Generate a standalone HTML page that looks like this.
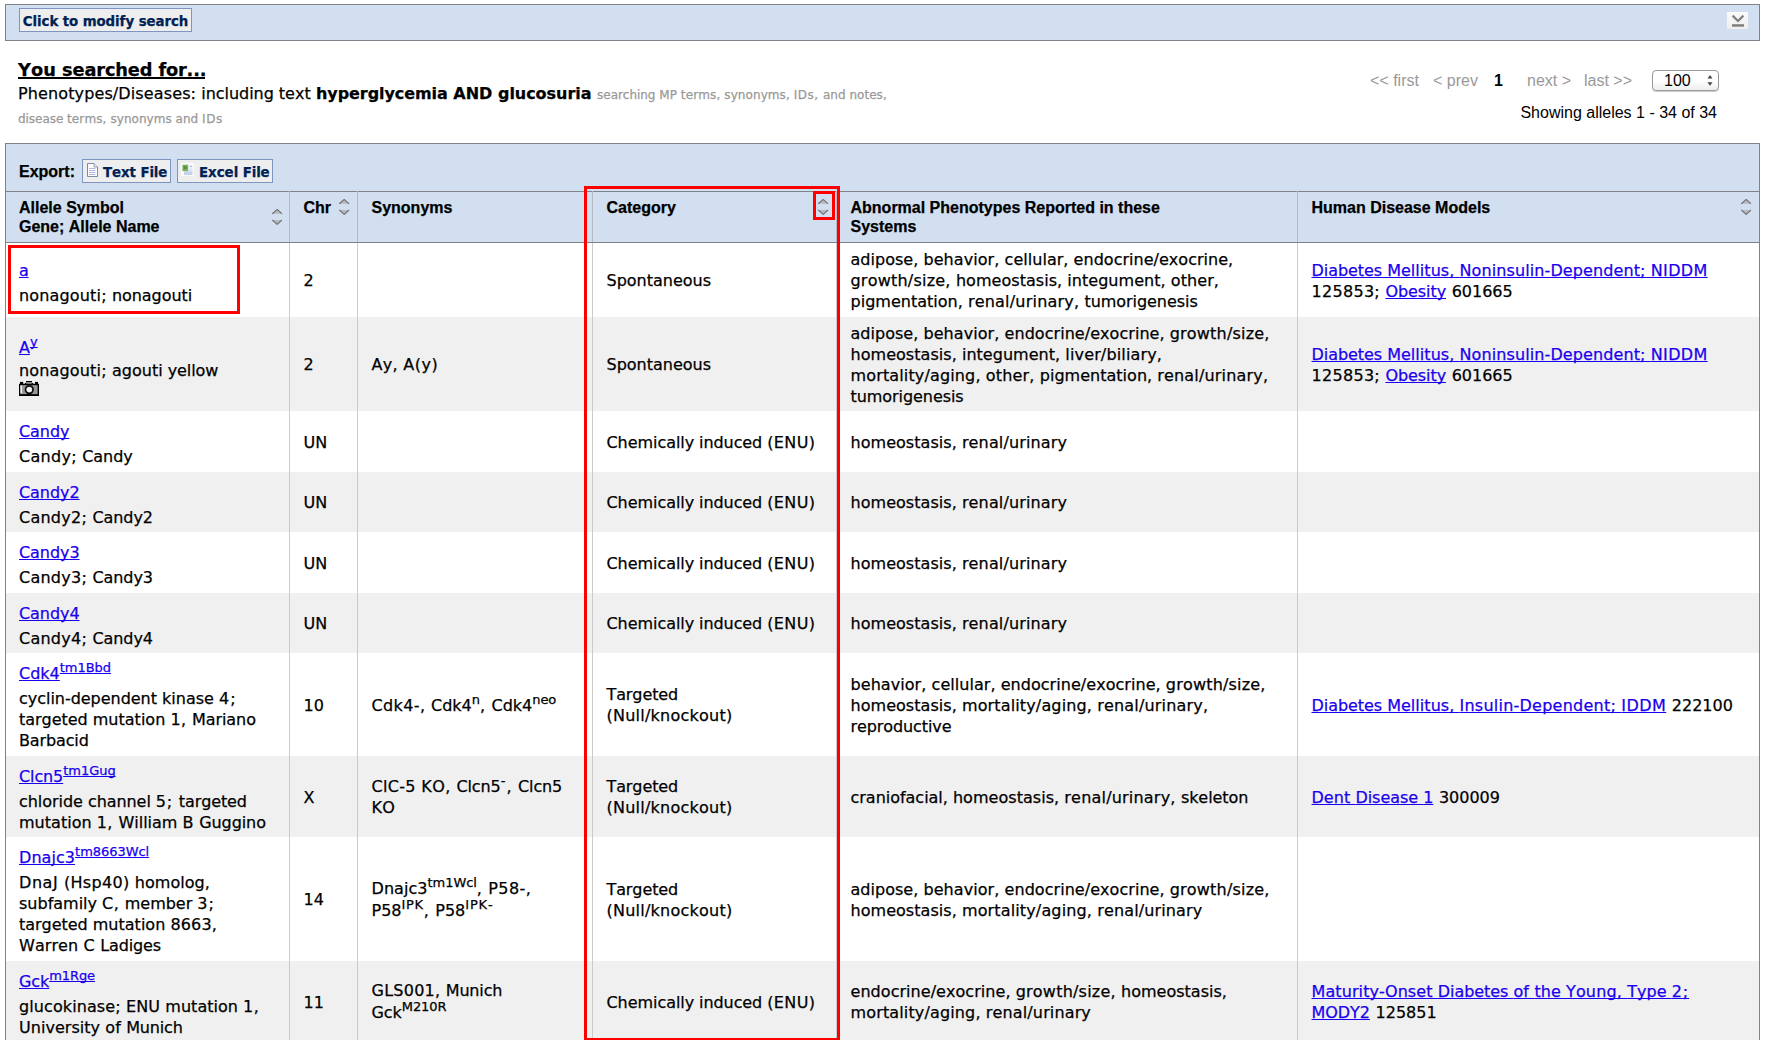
<!DOCTYPE html>
<html lang="en">
<head>
<meta charset="utf-8">
<title>Phenotypes, Alleles &amp; Disease Models Search</title>
<style>
html,body{margin:0;padding:0;background:#fff;}
body{width:1767px;height:1040px;overflow:hidden;position:relative;
  font-family:"DejaVu Sans","Liberation Sans",sans-serif;font-size:16px;color:#000;font-kerning:none;font-variant-ligatures:none;-webkit-text-stroke:0.25px;}
a{color:#1a00ee;text-decoration:underline;text-decoration-skip-ink:none;}
.abs{position:absolute;}
#topbar{left:5px;top:4px;width:1753px;height:35px;background:#d2dff0;border:1px solid #7f8389;}
#modbtn{left:19px;top:8px;height:22px;width:171px;border:1px solid #7d95c0;background:#eeeeee;
  font-weight:bold;font-size:13.33px;color:#002255;line-height:25px;text-align:center;white-space:nowrap;}
#collapse{left:1727px;top:12px;width:21px;height:17px;}
#ysf{text-decoration-skip-ink:none;left:18px;top:58px;font-weight:bold;font-size:17.77px;line-height:24px;white-space:nowrap;}
#ysf i{position:absolute;left:0;right:1px;top:19px;height:2px;background:#000;}
#q1{left:18px;top:83px;line-height:22px;white-space:nowrap;}
.small{font-size:12px;color:#999;}
#q2{left:18px;top:109px;line-height:20px;white-space:nowrap;}
#pag{top:70px;left:1360px;width:360px;height:22px;font-family:"Liberation Sans",sans-serif;font-size:16px;color:#999;white-space:nowrap;}
#pag span{position:absolute;top:0;line-height:22px;}
#sel{left:1652px;top:70px;width:65px;height:19px;border:1px solid #9a9a9a;border-radius:4px;background:linear-gradient(#fff,#fff 50%,#eee);box-shadow:0 1px 1px rgba(0,0,0,.2);
  font-family:"Liberation Sans",sans-serif;font-size:16px;line-height:19px;}
#showing{top:102px;right:50px;font-family:"Liberation Sans",sans-serif;font-size:16px;line-height:22px;white-space:nowrap;}
#wrap{left:5px;top:143px;width:1753px;height:900px;border:1px solid #7f8389;background:#d2dff0;}
#export{left:19px;top:162px;font-family:"Liberation Sans",sans-serif;font-weight:bold;font-size:16px;line-height:20px;}
.xbtn{top:159px;height:22px;border:1px solid #7d95c0;background:#eeeeee;font-weight:bold;font-size:13.33px;color:#002255;line-height:25px;white-space:nowrap;}
.xbtn span.t{position:absolute;top:0;}
table{position:absolute;left:6px;top:191px;border-collapse:collapse;table-layout:fixed;width:1753px;}
th{background:#d2dff0;font-family:"Liberation Sans",sans-serif;font-weight:bold;font-size:16px;line-height:19px;text-align:left;
  vertical-align:top;padding:6px 0 0 14px;border-top:1px solid #7f8389;border-bottom:1px solid #7f8389;border-right:1px solid #b4bac4;height:43px;position:relative;white-space:nowrap;}
td{padding:2px 0 0 14px;vertical-align:middle;border-right:1px solid #cbcbcb;line-height:21px;white-space:nowrap;}
td.c1{padding-top:6px;padding-left:13px;} th:first-child{padding-left:13px;} td.c1 .n{margin-top:4px;}
tr.o td{background:#fff;} tr.e td{background:#f0f0f0;}
th:last-child,td:last-child{border-right:none;}
sup{font-size:13px;line-height:0;vertical-align:baseline;position:relative;top:-7px;}
a sup{display:inline-block;text-decoration:underline;text-decoration-skip-ink:none;}
.sort{position:absolute;}
#pag,#sel,#showing{-webkit-text-stroke:0;}
.u1{position:relative;top:-1px;}
.red{border:3px solid #f00;box-sizing:border-box;}
</style>
</head>
<body>
<div id="topbar" class="abs"></div>
<div id="modbtn" class="abs"><span style="letter-spacing:-0.038px">Click </span><span style="letter-spacing:-0.130px">to </span><span style="letter-spacing:-0.043px">modify </span><span style="letter-spacing:-0.051px">search</span></div>
<svg id="collapse" class="abs" width="21" height="17" viewBox="0 0 21 17"><defs><linearGradient id="cg" x1="0" y1="0" x2="0" y2="1"><stop offset="0" stop-color="#fbfbfb"/><stop offset="1" stop-color="#eeeeee"/></linearGradient></defs><rect width="21" height="17" fill="url(#cg)"/><path d="M5.6 3.6 L11 9 L16.4 3.6" fill="none" stroke="#7f7f7f" stroke-width="2.2"/><rect x="5" y="12.2" width="12" height="2.5" fill="#7f7f7f"/></svg>

<div id="ysf" class="abs"><span style="letter-spacing:0.028px">You </span><span style="letter-spacing:-0.119px">searched </span><span style="letter-spacing:-0.192px">for...</span><i></i></div>
<div id="q1" class="abs"><span style="letter-spacing:0.121px">Phenotypes/Diseases: </span><span style="letter-spacing:-0.051px">including </span><span style="letter-spacing:0.058px">text </span><b><span style="letter-spacing:-0.073px">hyperglycemia </span><span style="letter-spacing:0.023px">AND </span><span style="letter-spacing:-0.044px">glucosuria</span></b><span style="letter-spacing:0.539px"> </span><span class="small"><span style="letter-spacing:-0.034px">searching </span><span style="letter-spacing:0.055px">MP </span><span style="letter-spacing:0.131px">terms, </span><span style="letter-spacing:0.086px">synonyms, </span><span style="letter-spacing:0.495px">IDs, </span><span style="letter-spacing:0.026px">and </span><span style="letter-spacing:0.045px">notes,</span></span></div>
<div id="q2" class="abs small"><span style="letter-spacing:-0.049px">disease </span><span style="letter-spacing:0.131px">terms, </span><span style="letter-spacing:0.034px">synonyms </span><span style="letter-spacing:0.026px">and </span><span style="letter-spacing:0.506px">IDs</span></div>

<div id="pag" class="abs"><span style="left:10px">&lt;&lt; first</span><span style="left:73px">&lt; prev</span><span style="left:134px;color:#000;font-weight:bold">1</span><span style="left:167px">next &gt;</span><span style="left:224px">last &gt;&gt;</span></div>
<div id="sel" class="abs"><span style="position:absolute;left:11px">100</span><svg style="position:absolute;left:52.6px;top:4px" width="8" height="12" viewBox="0 0 8 12"><path d="M1.5 3.5 L4 0 L6.5 3.5 Z M1.5 7.2 L4 10.7 L6.5 7.2 Z" fill="#444"/></svg></div>
<div id="showing" class="abs">Showing alleles 1 - 34 of 34</div>

<div id="wrap" class="abs"></div>
<div id="export" class="abs">Export:</div>
<div class="abs xbtn" style="left:82px;width:87px;"><svg style="position:absolute;left:4px;top:3px" width="11" height="14" viewBox="0 0 11 14"><path d="M0.5 0.5 H7 L10.5 4 V13.5 H0.5 Z" fill="#fdfdff" stroke="#7d8aa0" stroke-width="1"/><path d="M7 0.5 V4 H10.5" fill="#e8ecf4" stroke="#7d8aa0" stroke-width="0.8"/><path d="M2 5.5 H8.5 M2 7.5 H8.5 M2 9.5 H8.5 M2 11.5 H8.5" stroke="#a9b2dc" stroke-width="0.9"/></svg><span class="t" style="left:20px"><span style="letter-spacing:-0.052px">Text </span><span style="letter-spacing:-0.163px">File</span></span></div>
<div class="abs xbtn" style="left:177px;width:94px;"><svg style="position:absolute;left:3px;top:3px" width="13" height="13" viewBox="0 0 13 13"><defs><linearGradient id="xg" x1="0" y1="0" x2="0" y2="1"><stop offset="0" stop-color="#f3f6fb"/><stop offset="0.55" stop-color="#dde6f4"/><stop offset="1" stop-color="#b3c6e4"/></linearGradient></defs><rect width="13" height="13" fill="#fafafa"/><path d="M3 1.8 H9.4 L11.5 4 V11.7 H3 Z" fill="url(#xg)"/><path d="M9.4 1.8 L11.5 4 H9.4 Z" fill="#a9b7cf"/><rect x="1.4" y="1.7" width="5.7" height="6.4" fill="#7fb061"/><rect x="2.6" y="3.3" width="3" height="2.8" fill="#4c9436"/></svg><span class="t" style="left:21px"><span style="letter-spacing:-0.004px">Excel </span><span style="letter-spacing:-0.163px">File</span></span></div>

<table>
<colgroup><col style="width:283px"><col style="width:68px"><col style="width:235px"><col style="width:244px"><col style="width:461px"><col style="width:462px"></colgroup>
<tr style="height:51px"><th>Allele Symbol<br>Gene; Allele Name<svg class="sort" style="right:6.5px;top:17.2px" width="10.4" height="15.8" viewBox="0 0 10.4 15.8"><path d="M0.4 4.8 L5.2 0.4 L10 4.8 Z" fill="#b7b9bb"/><path d="M0.3 4.8 L5.2 0.4 L10.1 4.8" fill="none" stroke="#686d74" stroke-width="1.05"/><path d="M0.4 11 L5.2 15.4 L10 11 Z" fill="#b7b9bb"/><path d="M0.3 11 L5.2 15.4 L10.1 11" fill="none" stroke="#686d74" stroke-width="1.05"/></svg></th><th>Chr<svg class="sort" style="right:6.9px;top:7.1px" width="10.4" height="15.8" viewBox="0 0 10.4 15.8"><path d="M0.4 4.8 L5.2 0.4 L10 4.8 Z" fill="#b7b9bb"/><path d="M0.3 4.8 L5.2 0.4 L10.1 4.8" fill="none" stroke="#686d74" stroke-width="1.05"/><path d="M0.4 11 L5.2 15.4 L10 11 Z" fill="#b7b9bb"/><path d="M0.3 11 L5.2 15.4 L10.1 11" fill="none" stroke="#686d74" stroke-width="1.05"/></svg></th><th>Synonyms</th><th>Category<svg class="sort" style="right:6.8px;top:7.1px" width="10.4" height="15.8" viewBox="0 0 10.4 15.8"><path d="M0.4 4.8 L5.2 0.4 L10 4.8 Z" fill="#b7b9bb"/><path d="M0.3 4.8 L5.2 0.4 L10.1 4.8" fill="none" stroke="#686d74" stroke-width="1.05"/><path d="M0.4 11 L5.2 15.4 L10 11 Z" fill="#b7b9bb"/><path d="M0.3 11 L5.2 15.4 L10.1 11" fill="none" stroke="#686d74" stroke-width="1.05"/></svg></th><th>Abnormal Phenotypes Reported in these<br>Systems</th><th>Human Disease Models<svg class="sort" style="right:7.9px;top:6.9px" width="10.4" height="15.8" viewBox="0 0 10.4 15.8"><path d="M0.4 4.8 L5.2 0.4 L10 4.8 Z" fill="#b7b9bb"/><path d="M0.3 4.8 L5.2 0.4 L10.1 4.8" fill="none" stroke="#686d74" stroke-width="1.05"/><path d="M0.4 11 L5.2 15.4 L10 11 Z" fill="#b7b9bb"/><path d="M0.3 11 L5.2 15.4 L10.1 11" fill="none" stroke="#686d74" stroke-width="1.05"/></svg></th></tr>
<tr class="o" style="height:74px"><td class="c1"><div class="l"><a><span style="letter-spacing:-0.195px">a</span></a></div><div class="n"><span style="letter-spacing:0.164px">nonagouti; </span><span style="letter-spacing:-0.068px">nonagouti</span></div></td><td><span style="letter-spacing:-0.008px">2</span></td><td></td><td><span style="letter-spacing:-0.008px">Spontaneous</span></td><td><span style="letter-spacing:0.029px">adipose, </span><span style="letter-spacing:0.068px">behavior, </span><span style="letter-spacing:0.037px">cellular, </span><span style="letter-spacing:0.023px">endocrine/exocrine,</span><br><span style="letter-spacing:0.215px">growth/size, </span><span style="letter-spacing:0.042px">homeostasis, </span><span style="letter-spacing:0.033px">integument, </span><span style="letter-spacing:0.102px">other,</span><br><span style="letter-spacing:0.015px">pigmentation, </span><span style="letter-spacing:0.203px">renal/urinary, </span><span style="letter-spacing:-0.059px">tumorigenesis</span></td><td><a><span style="letter-spacing:-0.054px">Diabetes </span><span style="letter-spacing:0.049px">Mellitus, </span><span style="letter-spacing:0.104px">Noninsulin-Dependent; </span><span style="letter-spacing:0.342px">NIDDM</span></a><br><span style="letter-spacing:0.296px">125853; </span><a><span style="letter-spacing:-0.075px">Obesity</span></a><span style="letter-spacing:0.539px"> </span><span style="letter-spacing:-0.008px">601665</span></td></tr>
<tr class="e" style="height:94px"><td class="c1"><div class="l"><a><span style="letter-spacing:-0.008px">A</span><sup><span style="letter-spacing:0.000px">y</span></sup></a></div><div class="n" style="margin-top:2px"><span style="letter-spacing:0.164px">nonagouti; </span><span style="letter-spacing:0.006px">agouti </span><span style="letter-spacing:-0.082px">yellow</span></div><div style="height:16px"><svg style="display:block" width="20" height="15" viewBox="0 0 20 15"><rect x="1" y="0.9" width="3.2" height="3" fill="#000"/><rect x="16" y="0.9" width="3" height="3" fill="#000"/><rect x="7" y="0" width="6" height="4" fill="#999"/><rect x="7" y="0" width="6" height="1.1" fill="#000"/><rect x="0.7" y="3.5" width="18.6" height="10.6" fill="#999" stroke="#000" stroke-width="1.4"/><rect x="0" y="13.4" width="20" height="1.6" fill="#000"/><rect x="1.4" y="4.3" width="1.6" height="8" fill="#f2f2f2"/><path d="M6 3.6 L7 2 M14 3.6 L13 2" stroke="#000" stroke-width="1.4"/><circle cx="10.3" cy="8.6" r="3.75" fill="#999" stroke="#111" stroke-width="1.8"/><circle cx="10.3" cy="8.6" r="2.7" fill="#f4f4f4"/><rect x="8.3" y="12.4" width="3.6" height="1.2" fill="#000"/></svg></div></td><td><span style="letter-spacing:-0.008px">2</span></td><td><span style="letter-spacing:0.316px">Ay, </span><span style="letter-spacing:0.510px">A(y)</span></td><td><span style="letter-spacing:-0.008px">Spontaneous</span></td><td><span style="letter-spacing:0.029px">adipose, </span><span style="letter-spacing:0.068px">behavior, </span><span style="letter-spacing:0.049px">endocrine/exocrine, </span><span style="letter-spacing:0.188px">growth/size,</span><br><span style="letter-spacing:0.042px">homeostasis, </span><span style="letter-spacing:0.033px">integument, </span><span style="letter-spacing:0.153px">liver/biliary,</span><br><span style="letter-spacing:0.142px">mortality/aging, </span><span style="letter-spacing:0.164px">other, </span><span style="letter-spacing:0.015px">pigmentation, </span><span style="letter-spacing:0.179px">renal/urinary,</span><br><span style="letter-spacing:-0.059px">tumorigenesis</span></td><td><a><span style="letter-spacing:-0.054px">Diabetes </span><span style="letter-spacing:0.049px">Mellitus, </span><span style="letter-spacing:0.104px">Noninsulin-Dependent; </span><span style="letter-spacing:0.342px">NIDDM</span></a><br><span style="letter-spacing:0.296px">125853; </span><a><span style="letter-spacing:-0.075px">Obesity</span></a><span style="letter-spacing:0.539px"> </span><span style="letter-spacing:-0.008px">601665</span></td></tr>
<tr class="o" style="height:61px"><td class="c1"><div class="l"><a><span style="letter-spacing:-0.080px">Candy</span></a></div><div class="n"><span style="letter-spacing:0.288px">Candy; </span><span style="letter-spacing:-0.080px">Candy</span></div></td><td><span style="letter-spacing:0.000px">UN</span></td><td></td><td><span style="letter-spacing:-0.058px">Chemically </span><span style="letter-spacing:-0.087px">induced </span><span style="letter-spacing:0.411px">(ENU)</span></td><td><span style="letter-spacing:0.042px">homeostasis, </span><span style="letter-spacing:0.136px">renal/urinary</span></td><td></td></tr>
<tr class="e" style="height:60px"><td class="c1"><div class="l"><a><span style="letter-spacing:-0.068px">Candy2</span></a></div><div class="n"><span style="letter-spacing:0.251px">Candy2; </span><span style="letter-spacing:-0.068px">Candy2</span></div></td><td><span style="letter-spacing:0.000px">UN</span></td><td></td><td><span style="letter-spacing:-0.058px">Chemically </span><span style="letter-spacing:-0.087px">induced </span><span style="letter-spacing:0.411px">(ENU)</span></td><td><span style="letter-spacing:0.042px">homeostasis, </span><span style="letter-spacing:0.136px">renal/urinary</span></td><td></td></tr>
<tr class="o" style="height:61px"><td class="c1"><div class="l"><a><span style="letter-spacing:-0.068px">Candy3</span></a></div><div class="n"><span style="letter-spacing:0.251px">Candy3; </span><span style="letter-spacing:-0.068px">Candy3</span></div></td><td><span style="letter-spacing:0.000px">UN</span></td><td></td><td><span style="letter-spacing:-0.058px">Chemically </span><span style="letter-spacing:-0.087px">induced </span><span style="letter-spacing:0.411px">(ENU)</span></td><td><span style="letter-spacing:0.042px">homeostasis, </span><span style="letter-spacing:0.136px">renal/urinary</span></td><td></td></tr>
<tr class="e" style="height:60px"><td class="c1"><div class="l"><a><span style="letter-spacing:-0.068px">Candy4</span></a></div><div class="n"><span style="letter-spacing:0.251px">Candy4; </span><span style="letter-spacing:-0.068px">Candy4</span></div></td><td><span style="letter-spacing:0.000px">UN</span></td><td></td><td><span style="letter-spacing:-0.058px">Chemically </span><span style="letter-spacing:-0.087px">induced </span><span style="letter-spacing:0.411px">(ENU)</span></td><td><span style="letter-spacing:0.042px">homeostasis, </span><span style="letter-spacing:0.136px">renal/urinary</span></td><td></td></tr>
<tr class="o" style="height:103px"><td class="c1"><div class="l"><a><span style="letter-spacing:0.002px">Cdk4</span><sup><span style="letter-spacing:-0.052px">tm1Bbd</span></sup></a></div><div class="n"><span style="letter-spacing:-0.030px">cyclin-dependent </span><span style="letter-spacing:0.023px">kinase </span><span style="letter-spacing:0.934px">4;</span><br><span style="letter-spacing:-0.038px">targeted </span><span style="letter-spacing:0.024px">mutation </span><span style="letter-spacing:0.422px">1, </span><span style="letter-spacing:-0.087px">Mariano</span><br><span style="letter-spacing:-0.130px">Barbacid</span></div></td><td><span style="letter-spacing:-0.008px">10</span></td><td><span style="letter-spacing:0.396px">Cdk4-, </span><span style="letter-spacing:0.002px">Cdk4</span><sup><span style="letter-spacing:-0.013px">n</span></sup><span style="letter-spacing:0.637px">, </span><span style="letter-spacing:0.002px">Cdk4</span><sup><span style="letter-spacing:-0.110px">neo</span></sup></td><td><span style="letter-spacing:-0.104px">Targeted</span><br><span style="letter-spacing:0.239px">(Null/knockout)</span></td><td><span style="letter-spacing:0.068px">behavior, </span><span style="letter-spacing:0.037px">cellular, </span><span style="letter-spacing:0.049px">endocrine/exocrine, </span><span style="letter-spacing:0.188px">growth/size,</span><br><span style="letter-spacing:0.042px">homeostasis, </span><span style="letter-spacing:0.142px">mortality/aging, </span><span style="letter-spacing:0.179px">renal/urinary,</span><br><span style="letter-spacing:-0.090px">reproductive</span></td><td><a><span style="letter-spacing:-0.054px">Diabetes </span><span style="letter-spacing:0.049px">Mellitus, </span><span style="letter-spacing:0.235px">Insulin-Dependent; </span><span style="letter-spacing:0.428px">IDDM</span></a><span style="letter-spacing:0.539px"> </span><span style="letter-spacing:-0.008px">222100</span></td></tr>
<tr class="e" style="height:81px"><td class="c1"><div class="l"><a><span style="letter-spacing:-0.108px">Clcn5</span><sup><span style="letter-spacing:-0.026px">tm1Gug</span></sup></a></div><div class="n"><span style="letter-spacing:-0.042px">chloride </span><span style="letter-spacing:-0.066px">channel </span><span style="letter-spacing:0.802px">5; </span><span style="letter-spacing:-0.110px">targeted</span><br><span style="letter-spacing:0.024px">mutation </span><span style="letter-spacing:0.422px">1, </span><span style="letter-spacing:0.013px">William </span><span style="letter-spacing:0.266px">B </span><span style="letter-spacing:-0.076px">Guggino</span></div></td><td><span style="letter-spacing:0.000px">X</span></td><td><span style="letter-spacing:0.328px">ClC-5 </span><span style="letter-spacing:0.467px">KO, </span><span style="letter-spacing:-0.108px">Clcn5</span><sup><span style="letter-spacing:1.212px">-</span></sup><span style="letter-spacing:0.637px">, </span><span style="letter-spacing:-0.108px">Clcn5</span><br><span style="letter-spacing:0.297px">KO</span></td><td><span style="letter-spacing:-0.104px">Targeted</span><br><span style="letter-spacing:0.239px">(Null/knockout)</span></td><td><span style="letter-spacing:-0.018px">craniofacial, </span><span style="letter-spacing:0.042px">homeostasis, </span><span style="letter-spacing:0.203px">renal/urinary, </span><span style="letter-spacing:-0.067px">skeleton</span></td><td><a><span style="letter-spacing:0.050px">Dent </span><span style="letter-spacing:-0.041px">Disease </span><span style="letter-spacing:-0.008px">1</span></a><span style="letter-spacing:0.539px"> </span><span style="letter-spacing:-0.008px">300009</span></td></tr>
<tr class="o" style="height:124px"><td class="c1"><div class="l"><a><span style="letter-spacing:0.065px">Dnajc3</span><sup><span style="letter-spacing:-0.049px">tm8663Wcl</span></sup></a></div><div class="n"><span style="letter-spacing:0.578px">DnaJ </span><span style="letter-spacing:0.297px">(Hsp40) </span><span style="letter-spacing:0.027px">homolog,</span><br><span style="letter-spacing:0.000px">subfamily </span><span style="letter-spacing:0.424px">C, </span><span style="letter-spacing:-0.010px">member </span><span style="letter-spacing:0.934px">3;</span><br><span style="letter-spacing:-0.038px">targeted </span><span style="letter-spacing:0.024px">mutation </span><span style="letter-spacing:0.141px">8663,</span><br><span style="letter-spacing:0.074px">Warren </span><span style="letter-spacing:0.270px">C </span><span style="letter-spacing:-0.135px">Ladiges</span></div></td><td><span style="letter-spacing:-0.008px">14</span></td><td><span class="u1"><span style="letter-spacing:0.065px">Dnajc3</span><sup><span style="letter-spacing:-0.070px">tm1Wcl</span></sup><span style="letter-spacing:0.637px">, </span><span style="letter-spacing:0.442px">P58-,</span></span><br><span style="letter-spacing:-0.005px">P58</span><sup><span style="letter-spacing:0.707px">IPK</span></sup><span style="letter-spacing:0.637px">, </span><span style="letter-spacing:-0.005px">P58</span><sup><span style="letter-spacing:0.833px">IPK-</span></sup></td><td><span style="letter-spacing:-0.104px">Targeted</span><br><span style="letter-spacing:0.239px">(Null/knockout)</span></td><td><span style="letter-spacing:0.029px">adipose, </span><span style="letter-spacing:0.068px">behavior, </span><span style="letter-spacing:0.049px">endocrine/exocrine, </span><span style="letter-spacing:0.188px">growth/size,</span><br><span style="letter-spacing:0.042px">homeostasis, </span><span style="letter-spacing:0.142px">mortality/aging, </span><span style="letter-spacing:0.136px">renal/urinary</span></td><td></td></tr>
<tr class="e" style="height:81px"><td class="c1"><div class="l"><a><span style="letter-spacing:-0.083px">Gck</span><sup><span style="letter-spacing:-0.085px">m1Rge</span></sup></a></div><div class="n"><span style="letter-spacing:0.096px">glucokinase; </span><span style="letter-spacing:0.137px">ENU </span><span style="letter-spacing:0.024px">mutation </span><span style="letter-spacing:0.363px">1,</span><br><span style="letter-spacing:0.035px">University </span><span style="letter-spacing:0.151px">of </span><span style="letter-spacing:-0.147px">Munich</span></div></td><td><span style="letter-spacing:-0.008px">11</span></td><td><span class="u1"><span style="letter-spacing:0.254px">GLS001, </span><span style="letter-spacing:-0.147px">Munich</span></span><br><span style="letter-spacing:-0.083px">Gck</span><sup><span style="letter-spacing:-0.055px">M210R</span></sup></td><td><span style="letter-spacing:-0.058px">Chemically </span><span style="letter-spacing:-0.087px">induced </span><span style="letter-spacing:0.411px">(ENU)</span></td><td><span style="letter-spacing:0.049px">endocrine/exocrine, </span><span style="letter-spacing:0.215px">growth/size, </span><span style="letter-spacing:0.001px">homeostasis,</span><br><span style="letter-spacing:0.142px">mortality/aging, </span><span style="letter-spacing:0.136px">renal/urinary</span></td><td><a><span style="letter-spacing:0.097px">Maturity-Onset </span><span style="letter-spacing:-0.054px">Diabetes </span><span style="letter-spacing:0.151px">of </span><span style="letter-spacing:0.061px">the </span><span style="letter-spacing:0.150px">Young, </span><span style="letter-spacing:0.025px">Type </span><span style="letter-spacing:0.934px">2;</span></a><br><a><span style="letter-spacing:-0.050px">MODY2</span></a><span style="letter-spacing:0.539px"> </span><span style="letter-spacing:-0.008px">125851</span></td></tr>
</table>

<div class="abs red" style="left:8px;top:245px;width:232px;height:69px;"></div>
<div class="abs red" style="left:584px;top:186px;width:256px;height:855px;"></div>
<div class="abs red" style="left:813px;top:191px;width:22px;height:29px;"></div>
</body>
</html>
